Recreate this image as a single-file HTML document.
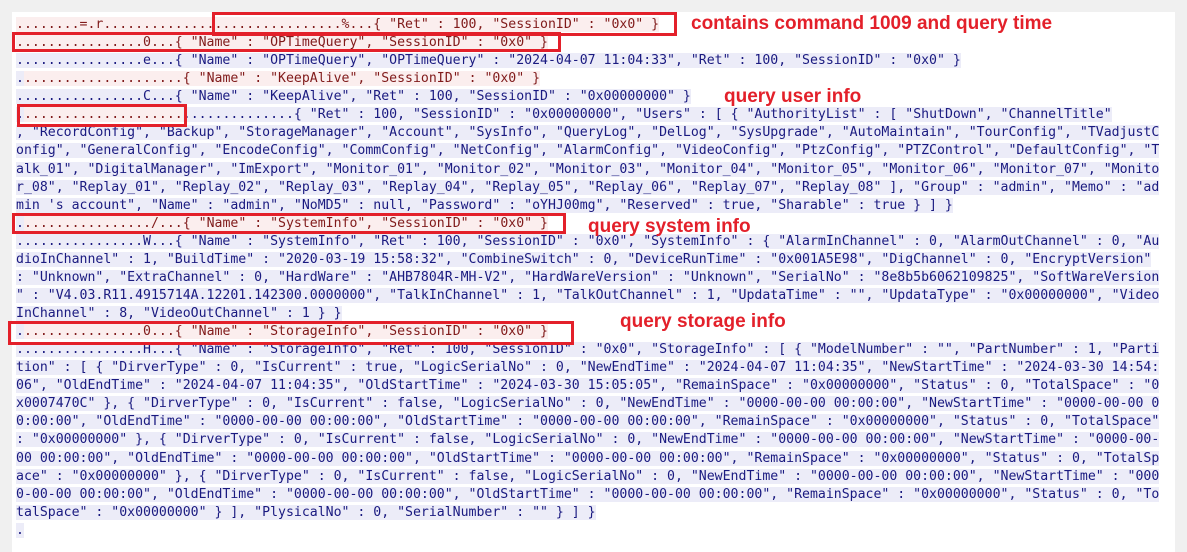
<!DOCTYPE html>
<html><head><meta charset="utf-8"><style>
html,body{margin:0;padding:0;}
body{width:1187px;height:539px;background:#f0f0f0;position:relative;overflow:hidden;}
#panel{position:absolute;left:12px;top:12px;width:1163px;height:540px;background:#fff;}
#txt{position:absolute;left:16px;top:16px;font-family:"DejaVu Sans Mono","Liberation Mono",monospace;font-size:13.2px;line-height:18.07px;white-space:pre;}
.b{background:#ececf8;color:#1a1a80;}
.p{background:#fbeeee;color:#801a1a;}
.box{position:absolute;border:3px solid #e3202a;box-sizing:border-box;}
.lab{position:absolute;font-family:"Liberation Sans",sans-serif;font-weight:bold;font-size:19px;color:#e3202a;white-space:nowrap;}
</style></head><body>
<div id="panel"></div>
<div id="txt"><div><span class="p">........=.r..............................%...{ "Ret" : 100, "SessionID" : "0x0" }</span></div><div><span class="p">................0...{ "Name" : "OPTimeQuery", "SessionID" : "0x0" }</span></div><div><span class="b">................e...{ "Name" : "OPTimeQuery", "OPTimeQuery" : "2024-04-07 11:04:33", "Ret" : 100, "SessionID" : "0x0" }</span></div><div><span class="b">.</span><span class="p">....................{ "Name" : "KeepAlive", "SessionID" : "0x0" }</span></div><div><span class="b">................C...{ "Name" : "KeepAlive", "Ret" : 100, "SessionID" : "0x00000000" }</span></div><div><span class="b">.</span><span class="p">....................</span><span class="b">..............{ "Ret" : 100, "SessionID" : "0x00000000", "Users" : [ { "AuthorityList" : [ "ShutDown", "ChannelTitle"</span></div><div><span class="b">, "RecordConfig", "Backup", "StorageManager", "Account", "SysInfo", "QueryLog", "DelLog", "SysUpgrade", "AutoMaintain", "TourConfig", "TVadjustC</span></div><div><span class="b">onfig", "GeneralConfig", "EncodeConfig", "CommConfig", "NetConfig", "AlarmConfig", "VideoConfig", "PtzConfig", "PTZControl", "DefaultConfig", "T</span></div><div><span class="b">alk_01", "DigitalManager", "ImExport", "Monitor_01", "Monitor_02", "Monitor_03", "Monitor_04", "Monitor_05", "Monitor_06", "Monitor_07", "Monito</span></div><div><span class="b">r_08", "Replay_01", "Replay_02", "Replay_03", "Replay_04", "Replay_05", "Replay_06", "Replay_07", "Replay_08" ], "Group" : "admin", "Memo" : "ad</span></div><div><span class="b">min 's account", "Name" : "admin", "NoMD5" : null, "Password" : "oYHJ00mg", "Reserved" : true, "Sharable" : true } ] }</span></div><div><span class="b">.</span><span class="p">................/...{ "Name" : "SystemInfo", "SessionID" : "0x0" }</span></div><div><span class="b">................W...{ "Name" : "SystemInfo", "Ret" : 100, "SessionID" : "0x0", "SystemInfo" : { "AlarmInChannel" : 0, "AlarmOutChannel" : 0, "Au</span></div><div><span class="b">dioInChannel" : 1, "BuildTime" : "2020-03-19 15:58:32", "CombineSwitch" : 0, "DeviceRunTime" : "0x001A5E98", "DigChannel" : 0, "EncryptVersion"</span></div><div><span class="b">: "Unknown", "ExtraChannel" : 0, "HardWare" : "AHB7804R-MH-V2", "HardWareVersion" : "Unknown", "SerialNo" : "8e8b5b6062109825", "SoftWareVersion</span></div><div><span class="b">" : "V4.03.R11.4915714A.12201.142300.0000000", "TalkInChannel" : 1, "TalkOutChannel" : 1, "UpdataTime" : "", "UpdataType" : "0x00000000", "Video</span></div><div><span class="b">InChannel" : 8, "VideoOutChannel" : 1 } }</span></div><div><span class="b">.</span><span class="p">...............0...{ "Name" : "StorageInfo", "SessionID" : "0x0" }</span></div><div><span class="b">................H...{ "Name" : "StorageInfo", "Ret" : 100, "SessionID" : "0x0", "StorageInfo" : [ { "ModelNumber" : "", "PartNumber" : 1, "Parti</span></div><div><span class="b">tion" : [ { "DirverType" : 0, "IsCurrent" : true, "LogicSerialNo" : 0, "NewEndTime" : "2024-04-07 11:04:35", "NewStartTime" : "2024-03-30 14:54:</span></div><div><span class="b">06", "OldEndTime" : "2024-04-07 11:04:35", "OldStartTime" : "2024-03-30 15:05:05", "RemainSpace" : "0x00000000", "Status" : 0, "TotalSpace" : "0</span></div><div><span class="b">x0007470C" }, { "DirverType" : 0, "IsCurrent" : false, "LogicSerialNo" : 0, "NewEndTime" : "0000-00-00 00:00:00", "NewStartTime" : "0000-00-00 0</span></div><div><span class="b">0:00:00", "OldEndTime" : "0000-00-00 00:00:00", "OldStartTime" : "0000-00-00 00:00:00", "RemainSpace" : "0x00000000", "Status" : 0, "TotalSpace"</span></div><div><span class="b">: "0x00000000" }, { "DirverType" : 0, "IsCurrent" : false, "LogicSerialNo" : 0, "NewEndTime" : "0000-00-00 00:00:00", "NewStartTime" : "0000-00-</span></div><div><span class="b">00 00:00:00", "OldEndTime" : "0000-00-00 00:00:00", "OldStartTime" : "0000-00-00 00:00:00", "RemainSpace" : "0x00000000", "Status" : 0, "TotalSp</span></div><div><span class="b">ace" : "0x00000000" }, { "DirverType" : 0, "IsCurrent" : false, "LogicSerialNo" : 0, "NewEndTime" : "0000-00-00 00:00:00", "NewStartTime" : "000</span></div><div><span class="b">0-00-00 00:00:00", "OldEndTime" : "0000-00-00 00:00:00", "OldStartTime" : "0000-00-00 00:00:00", "RemainSpace" : "0x00000000", "Status" : 0, "To</span></div><div><span class="b">talSpace" : "0x00000000" } ], "PlysicalNo" : 0, "SerialNumber" : "" } ] }</span></div><div><span class="b">.</span></div></div>
<div class="box" style="left:212px;top:12px;width:465px;height:24px;"></div>
<div class="box" style="left:12px;top:32px;width:549px;height:20px;"></div>
<div class="box" style="left:17px;top:104px;width:170px;height:23px;"></div>
<div class="box" style="left:12px;top:213px;width:554px;height:21px;"></div>
<div class="box" style="left:8px;top:321px;width:566px;height:24px;"></div>
<div class="lab" style="left:691px;top:13px;">contains command 1009 and query time</div>
<div class="lab" style="left:724px;top:86px;">query user info</div>
<div class="lab" style="left:588px;top:216px;">query system info</div>
<div class="lab" style="left:620px;top:311px;">query storage info</div>
</body></html>
